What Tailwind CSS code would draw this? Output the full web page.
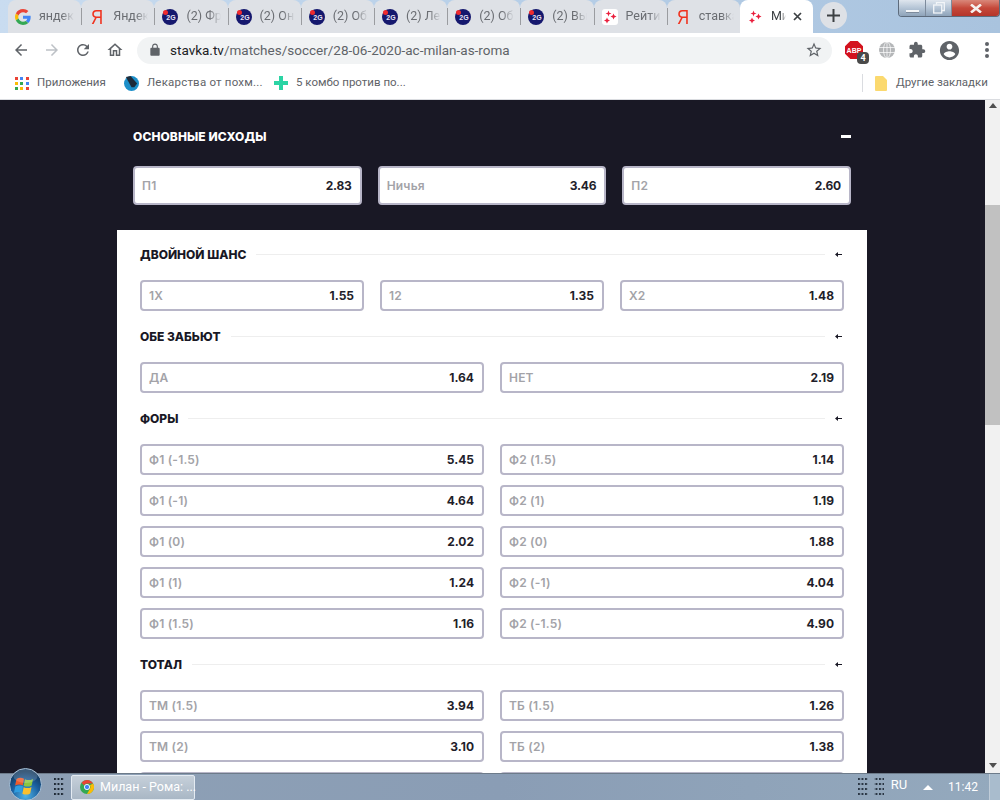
<!DOCTYPE html>
<html lang="ru">
<head>
    <meta charset="UTF-8">
    <title>Милан - Рома</title>
    <script src="https://cdn.jsdelivr.net/npm/@tailwindcss/browser@4"></script>
</head>
<body class="w-[1000px] h-[800px] overflow-hidden bg-white">
    <div class="flex flex-col h-[800px] font-['Roboto',sans-serif]">

        <!-- TABS -->
        <div class="relative flex h-[33px] shrink-0 pl-2 bg-gradient-to-r from-[#c9dcf0] via-[#b7cfe8] to-[#a9c3de]">
            <div class="flex items-center w-[73.2px] h-[33px] pl-[7px] gap-2 rounded-t-lg bg-[#dee1e6]">
                <svg class="w-4 h-4 shrink-0" viewBox="0 0 48 48"><path fill="#ea4335" d="M24 9.500c3.500 0 6.700 1.200 9.200 3.600l6.900-6.900C35.900 2.400 30.500 0 24 0 14.600 0 6.500 5.400 2.600 13.200l8 6.200C12.500 13.700 17.800 9.500 24 9.500z"/><path fill="#4285f4" d="M47 24.500c0-1.600-.1-3.100-.4-4.500H24v9h12.900c-.6 3-2.200 5.500-4.700 7.200l7.700 6c4.500-4.200 7.100-10.300 7.100-17.700z"/><path fill="#fbbc05" d="M10.600 28.600c-.5-1.400-.8-3-.8-4.600s.3-3.200.8-4.600l-8-6.200C.9 16.500 0 20.100 0 24s.9 7.500 2.600 10.800l8-6.200z"/><path fill="#34a853" d="M24 48c6.500 0 11.900-2.100 15.900-5.800l-7.700-6c-2.200 1.400-4.900 2.300-8.200 2.300-6.200 0-11.500-4.200-13.400-9.900l-8 6.200C6.500 42.600 14.600 48 24 48z"/></svg>
                <span class="w-[35px] overflow-hidden whitespace-nowrap text-[12.500px] text-[#6a6d72] [mask-image:linear-gradient(to_right,black_65%,transparent)]">яндекс</span>
            </div>
            <div class="flex items-center w-[73.2px] h-[33px] pl-[7px] gap-2 rounded-t-lg bg-[#dee1e6] border-l border-l-[#9a9ca0] [border-image:linear-gradient(transparent_25%,#9a9ca0_25%,#9a9ca0_75%,transparent_75%)_1]">
                <span class="w-4 shrink-0 text-center text-[21px] leading-4 scale-x-[.8] font-['Liberation_Sans',sans-serif] text-[#f0321e]">Я</span>
                <span class="w-[35px] overflow-hidden whitespace-nowrap text-[12.500px] text-[#6a6d72] [mask-image:linear-gradient(to_right,black_65%,transparent)]">Яндекс</span>
            </div>
            <div class="flex items-center w-[73.2px] h-[33px] pl-[7px] gap-2 rounded-t-lg bg-[#dee1e6] border-l border-l-[#9a9ca0] [border-image:linear-gradient(transparent_25%,#9a9ca0_25%,#9a9ca0_75%,transparent_75%)_1]">
                <svg class="w-4 h-4 shrink-0" viewBox="0 0 16 16"><circle cx="8" cy="8" r="8" fill="#15186e"/><circle cx="3.500" cy="3.500" r="2.500" fill="#ee2a2e"/><text x="9" y="11" text-anchor="middle" font-size="7" font-weight="700" fill="#e8e4f4" font-family="Liberation Sans">2G</text></svg>
                <span class="w-[35px] overflow-hidden whitespace-nowrap text-[12.500px] text-[#6a6d72] [mask-image:linear-gradient(to_right,black_65%,transparent)]">(2) Фрг</span>
            </div>
            <div class="flex items-center w-[73.2px] h-[33px] pl-[7px] gap-2 rounded-t-lg bg-[#dee1e6] border-l border-l-[#9a9ca0] [border-image:linear-gradient(transparent_25%,#9a9ca0_25%,#9a9ca0_75%,transparent_75%)_1]">
                <svg class="w-4 h-4 shrink-0" viewBox="0 0 16 16"><circle cx="8" cy="8" r="8" fill="#15186e"/><circle cx="3.500" cy="3.500" r="2.500" fill="#ee2a2e"/><text x="9" y="11" text-anchor="middle" font-size="7" font-weight="700" fill="#e8e4f4" font-family="Liberation Sans">2G</text></svg>
                <span class="w-[35px] overflow-hidden whitespace-nowrap text-[12.500px] text-[#6a6d72] [mask-image:linear-gradient(to_right,black_65%,transparent)]">(2) Она</span>
            </div>
            <div class="flex items-center w-[73.2px] h-[33px] pl-[7px] gap-2 rounded-t-lg bg-[#dee1e6] border-l border-l-[#9a9ca0] [border-image:linear-gradient(transparent_25%,#9a9ca0_25%,#9a9ca0_75%,transparent_75%)_1]">
                <svg class="w-4 h-4 shrink-0" viewBox="0 0 16 16"><circle cx="8" cy="8" r="8" fill="#15186e"/><circle cx="3.500" cy="3.500" r="2.500" fill="#ee2a2e"/><text x="9" y="11" text-anchor="middle" font-size="7" font-weight="700" fill="#e8e4f4" font-family="Liberation Sans">2G</text></svg>
                <span class="w-[35px] overflow-hidden whitespace-nowrap text-[12.500px] text-[#6a6d72] [mask-image:linear-gradient(to_right,black_65%,transparent)]">(2) Обз</span>
            </div>
            <div class="flex items-center w-[73.2px] h-[33px] pl-[7px] gap-2 rounded-t-lg bg-[#dee1e6] border-l border-l-[#9a9ca0] [border-image:linear-gradient(transparent_25%,#9a9ca0_25%,#9a9ca0_75%,transparent_75%)_1]">
                <svg class="w-4 h-4 shrink-0" viewBox="0 0 16 16"><circle cx="8" cy="8" r="8" fill="#15186e"/><circle cx="3.500" cy="3.500" r="2.500" fill="#ee2a2e"/><text x="9" y="11" text-anchor="middle" font-size="7" font-weight="700" fill="#e8e4f4" font-family="Liberation Sans">2G</text></svg>
                <span class="w-[35px] overflow-hidden whitespace-nowrap text-[12.500px] text-[#6a6d72] [mask-image:linear-gradient(to_right,black_65%,transparent)]">(2) Лет</span>
            </div>
            <div class="flex items-center w-[73.2px] h-[33px] pl-[7px] gap-2 rounded-t-lg bg-[#dee1e6] border-l border-l-[#9a9ca0] [border-image:linear-gradient(transparent_25%,#9a9ca0_25%,#9a9ca0_75%,transparent_75%)_1]">
                <svg class="w-4 h-4 shrink-0" viewBox="0 0 16 16"><circle cx="8" cy="8" r="8" fill="#15186e"/><circle cx="3.500" cy="3.500" r="2.500" fill="#ee2a2e"/><text x="9" y="11" text-anchor="middle" font-size="7" font-weight="700" fill="#e8e4f4" font-family="Liberation Sans">2G</text></svg>
                <span class="w-[35px] overflow-hidden whitespace-nowrap text-[12.500px] text-[#6a6d72] [mask-image:linear-gradient(to_right,black_65%,transparent)]">(2) Обз</span>
            </div>
            <div class="flex items-center w-[73.2px] h-[33px] pl-[7px] gap-2 rounded-t-lg bg-[#dee1e6] border-l border-l-[#9a9ca0] [border-image:linear-gradient(transparent_25%,#9a9ca0_25%,#9a9ca0_75%,transparent_75%)_1]">
                <svg class="w-4 h-4 shrink-0" viewBox="0 0 16 16"><circle cx="8" cy="8" r="8" fill="#15186e"/><circle cx="3.500" cy="3.500" r="2.500" fill="#ee2a2e"/><text x="9" y="11" text-anchor="middle" font-size="7" font-weight="700" fill="#e8e4f4" font-family="Liberation Sans">2G</text></svg>
                <span class="w-[35px] overflow-hidden whitespace-nowrap text-[12.500px] text-[#6a6d72] [mask-image:linear-gradient(to_right,black_65%,transparent)]">(2) Выб</span>
            </div>
            <div class="flex items-center w-[73.2px] h-[33px] pl-[7px] gap-2 rounded-t-lg bg-[#dee1e6] border-l border-l-[#9a9ca0] [border-image:linear-gradient(transparent_25%,#9a9ca0_25%,#9a9ca0_75%,transparent_75%)_1]">
                <svg class="w-4 h-4 shrink-0 rounded-[3px] bg-white" viewBox="0 0 16 16"><path fill="#ea1f3d" d="M6.500 1.500l.8 2.200 2.200.8-2.200.8-.8 2.200-.8-2.200-2.200-.8 2.200-.8zM11.500 4.500l.9 2.100 2.100.9-2.100.9-.9 2.100-.9-2.100-2.100-.9 2.100-.9zM5 8.500l.9 2.100 2.100.9-2.100.9L5 14.500l-.9-2.100-2.100-.9 2.100-.9z"/></svg>
                <span class="w-[35px] overflow-hidden whitespace-nowrap text-[12.500px] text-[#6a6d72] [mask-image:linear-gradient(to_right,black_65%,transparent)]">Рейтинг</span>
            </div>
            <div class="flex items-center w-[73.2px] h-[33px] pl-[7px] gap-2 rounded-t-lg bg-[#dee1e6] border-l border-l-[#9a9ca0] [border-image:linear-gradient(transparent_25%,#9a9ca0_25%,#9a9ca0_75%,transparent_75%)_1]">
                <span class="w-4 shrink-0 text-center text-[21px] leading-4 scale-x-[.8] font-['Liberation_Sans',sans-serif] text-[#f0321e]">Я</span>
                <span class="w-[35px] overflow-hidden whitespace-nowrap text-[12.500px] text-[#6a6d72] [mask-image:linear-gradient(to_right,black_65%,transparent)]">ставка</span>
            </div>
            <div class="flex items-center w-[73.2px] h-[33px] pl-[7px] gap-2 rounded-t-lg bg-white">
                <svg class="w-4 h-4 shrink-0" viewBox="0 0 16 16"><path fill="#ea1f3d" d="M6.500 1.500l.8 2.200 2.200.8-2.200.8-.8 2.200-.8-2.200-2.200-.8 2.200-.8zM11.500 4.500l.9 2.100 2.100.9-2.100.9-.9 2.100-.9-2.100-2.100-.9 2.100-.9zM5 8.500l.9 2.100 2.100.9-2.100.9L5 14.500l-.9-2.100-2.100-.9 2.100-.9z"/></svg>
                <span class="w-[15px] overflow-hidden whitespace-nowrap text-[12.500px] text-[#3c4043] [mask-image:linear-gradient(to_right,black_65%,transparent)]">Милан</span>
                <svg class="w-[9px] h-[9px] -ml-[1px] shrink-0" viewBox="0 0 9 9" stroke="#3c4043" stroke-width="1.700"><path d="M1 1l7 7M8 1l-7 7"/></svg>
            </div>
            <div class="flex items-center justify-center w-[27px] h-[27px] ml-[7px] mt-[2px] rounded-full bg-[#dee1e6]">
                <svg class="w-[13px] h-[13px]" viewBox="0 0 13 13" fill="#3c4043"><path d="M5.500 0h2v5.500H13v2H7.500V13h-2V7.500H0v-2h5.500z"/></svg>
            </div>
            <!-- window buttons -->
            <div class="absolute top-0 right-0 flex w-[102px] h-[17px] rounded-b-[4px] border border-t-0 border-[#5d6b7c] overflow-hidden">
                <div class="flex items-end justify-center w-[27px] pb-[3px] bg-gradient-to-b from-[#dfe6ee] via-[#b5c5d6] to-[#8ea3b9] border-r border-[#7d8b9c]"><div class="w-[13px] h-[3px] bg-[#f4f6f8] border-b border-[#7d8b9c]"></div></div>
                <div class="flex items-center justify-center w-[26px] bg-gradient-to-b from-[#dfe6ee] via-[#b5c5d6] to-[#8ea3b9] border-r border-[#7d8b9c]"><svg class="w-[12px] h-[12px]" viewBox="0 0 12 12" fill="none" stroke="#f2f5f8" stroke-width="1.300"><path d="M3.500 2.500V.7h7.800v7.800H9"/><rect x=".7" y="3" width="8" height="8"/></svg></div>
                <div class="flex items-center justify-center flex-1 bg-gradient-to-b from-[#d9877a] via-[#c5483a] to-[#b5352a]"><svg class="w-[12px] h-[9px]" viewBox="0 0 12 9" stroke="#f5f0ee" stroke-width="2.600"><path d="M1 0.500l10 8M11 0.500l-10 8"/></svg></div>
            </div>
        </div>

        <!-- TOOLBAR -->
        <div class="flex items-center h-[34px] shrink-0 bg-white">
            <div class="flex items-center w-[137px] shrink-0 pl-3 gap-[13px]">
                <svg class="w-[18px] h-[18px]" viewBox="0 0 24 24" fill="#5f6368"><path d="M20 11H7.830l5.590-5.590L12 4l-8 8 8 8 1.410-1.410L7.830 13H20v-2z"/></svg>
                <svg class="w-[18px] h-[18px]" viewBox="0 0 24 24" fill="#bdc1c6"><path d="M4 13h12.170l-5.590 5.590L12 20l8-8-8-8-1.410 1.410L16.170 11H4v2z"/></svg>
                <svg class="w-[18px] h-[18px]" viewBox="0 0 24 24" fill="#5f6368"><path d="M17.650 6.350A7.958 7.958 0 0 0 12 4c-4.420 0-7.990 3.580-7.990 8s3.570 8 7.990 8c3.730 0 6.840-2.550 7.730-6h-2.080A5.990 5.990 0 0 1 12 18c-3.310 0-6-2.690-6-6s2.690-6 6-6c1.660 0 3.140.690 4.220 1.780L13 11h7V4l-2.350 2.350z"/></svg>
                <svg class="w-[18px] h-[18px] ml-[1px]" viewBox="0 0 24 24" fill="#5f6368"><path d="M12 5.690l5 4.500V18h-2v-6H9v6H7v-7.810l5-4.500M12 3L2 12h3v8h6v-6h2v6h6v-8h3L12 3z"/></svg>
            </div>
            <div class="flex items-center w-[695px] h-[27px] shrink-0 pl-[11px] pr-[9px] rounded-full bg-[#f1f3f4]">
                <svg class="w-3.5 h-3.5 shrink-0" viewBox="0 0 24 24" fill="#5f6368"><path d="M18 8h-1V6c0-2.760-2.240-5-5-5S7 3.240 7 6v2H6c-1.100 0-2 .9-2 2v10c0 1.100.9 2 2 2h12c1.100 0 2-.9 2-2V10c0-1.100-.9-2-2-2zM9 6c0-1.660 1.340-3 3-3s3 1.340 3 3v2H9V6z"/></svg>
                <span class="ml-[8px] text-[13.500px] text-[#5f6368] flex-1 whitespace-nowrap"><span class="text-[#202124]">stavka.tv</span>/matches/soccer/28-06-2020-ac-milan-as-roma</span>
                <svg class="w-[18px] h-[18px] shrink-0" viewBox="0 0 24 24" fill="#5f6368"><path d="M22 9.240l-7.190-.62L12 2 9.190 8.630 2 9.240l5.460 4.730L5.820 21 12 17.270 18.180 21l-1.630-7.030L22 9.240zM12 15.400l-3.760 2.270 1-4.280-3.320-2.880 4.380-.38L12 6.100l1.710 4.040 4.380.38-3.320 2.880 1 4.280L12 15.400z"/></svg>
            </div>
            <div class="relative flex items-center flex-1 pl-[13px] gap-[12px]">
                <div class="relative w-[18px] h-[18px]">
                    <svg class="w-[18px] h-[18px]" viewBox="0 0 18 18"><path fill="#d3121e" d="M5.300 0h7.400L18 5.300v7.400L12.700 18H5.300L0 12.700V5.300z"/><text x="9" y="11.500" text-anchor="middle" font-size="7" font-weight="700" fill="#fff" font-family="Liberation Sans">ABP</text></svg>
                    <span class="absolute -right-[6px] -bottom-[5px] w-3 h-[12px] rounded-sm bg-[#4a4a4a] text-white text-[9px] leading-[12px] text-center font-bold">4</span>
                </div>
                <svg class="w-4 h-4 ml-[4px]" viewBox="0 0 16 16" fill="none" stroke="#fff" stroke-width=".7"><circle cx="8" cy="8" r="8" fill="#b4b6b8" stroke="none"/><ellipse cx="8" cy="8" rx="3.500" ry="8"/><path d="M0 5.500h16M0 10.500h16M8 0v16"/></svg>
                <svg class="w-[18px] h-[18px] ml-[1px]" viewBox="0 0 24 24" fill="#5f6368"><path d="M20.500 11H19V7c0-1.100-.9-2-2-2h-4V3.500C13 2.120 11.880 1 10.500 1S8 2.120 8 3.500V5H4c-1.100 0-1.990.9-1.990 2v3.800H3.500c1.490 0 2.700 1.210 2.700 2.700s-1.210 2.700-2.700 2.700H2V20c0 1.100.9 2 2 2h3.800v-1.500c0-1.490 1.210-2.700 2.700-2.700 1.490 0 2.700 1.210 2.700 2.700V22H17c1.100 0 2-.9 2-2v-4h1.500c1.380 0 2.500-1.120 2.500-2.500S21.880 11 20.500 11z"/></svg>
                <svg class="w-[23px] h-[23px]" viewBox="0 0 24 24" fill="#5f6368"><path d="M12 2C6.480 2 2 6.480 2 12s4.480 10 10 10 10-4.480 10-10S17.520 2 12 2zm0 3c1.660 0 3 1.340 3 3s-1.340 3-3 3-3-1.340-3-3 1.340-3 3-3zm0 14.200c-2.500 0-4.710-1.280-6-3.220.03-1.990 4-3.080 6-3.080 1.990 0 5.970 1.090 6 3.080-1.290 1.940-3.500 3.220-6 3.220z"/></svg>
                <div class="flex flex-col gap-[2.500px] ml-[12px]">
                    <div class="w-[3.500px] h-[3.500px] rounded-full bg-[#5f6368]"></div>
                    <div class="w-[3.500px] h-[3.500px] rounded-full bg-[#5f6368]"></div>
                    <div class="w-[3.500px] h-[3.500px] rounded-full bg-[#5f6368]"></div>
                </div>
            </div>
        </div>

        <!-- BOOKMARKS -->
        <div class="flex items-center h-[33px] shrink-0 pl-[15px] pr-[14px] bg-white border-b border-[#dadce0] text-[11.500px] text-[#5f6368]">
            <div class="grid grid-cols-3 gap-[2px] w-[14px] shrink-0">
                <div class="w-[3px] h-[3px] bg-[#ea4335]"></div><div class="w-[3px] h-[3px] bg-[#4285f4]"></div><div class="w-[3px] h-[3px] bg-[#ea4335]"></div>
                <div class="w-[3px] h-[3px] bg-[#fbbc05]"></div><div class="w-[3px] h-[3px] bg-[#34a853]"></div><div class="w-[3px] h-[3px] bg-[#4285f4]"></div>
                <div class="w-[3px] h-[3px] bg-[#34a853]"></div><div class="w-[3px] h-[3px] bg-[#fbbc05]"></div><div class="w-[3px] h-[3px] bg-[#ea4335]"></div>
            </div>
            <span class="ml-[8px] w-[69px] whitespace-nowrap">Приложения</span>
            <svg class="w-[15px] h-[15px] ml-[18px] shrink-0" viewBox="0 0 16 16"><circle cx="8" cy="8" r="8" fill="#1c8fc9"/><path fill="#1d2b3a" d="M2 1l5-1 7 8-3 4-3 0z"/></svg>
            <span class="ml-[8px] w-[121px] whitespace-nowrap tracking-[0.2px]">Лекарства от похм...</span>
            <svg class="w-[14px] h-[14px] ml-[6px] shrink-0" viewBox="0 0 14 14" fill="#2bd4a4"><path d="M5 0h4v5h5v4H9v5H5V9H0V5h5z"/></svg>
            <span class="ml-[8px] whitespace-nowrap">5 комбо против по...</span>
            <div class="ml-auto w-px h-[18px] bg-[#dadce0]"></div>
            <svg class="w-3 h-[15px] ml-[12px] shrink-0" viewBox="0 0 12 15"><path fill="#fbd96f" d="M1 0h7l4 4v10a1 1 0 0 1-1 1H1a1 1 0 0 1-1-1V1a1 1 0 0 1 1-1z"/></svg>
            <span class="ml-[9px] w-[90px] whitespace-nowrap">Другие закладки</span>
        </div>

        <!-- PAGE -->
        <div class="flex h-[673px] shrink-0 overflow-hidden">
            <main class="w-[985px] shrink-0 bg-[#191825] font-['Inter',sans-serif] [font-feature-settings:'calt'_0] overflow-hidden">
                <section class="w-[750px] ml-[117px] pt-[28px]">
                    <div class="px-4">
                        <div class="flex items-center justify-between h-4 mb-[22px]">
                            <h2 class="pt-[1px] text-[12px] font-extrabold tracking-[0.1px] text-white">ОСНОВНЫЕ ИСХОДЫ</h2>
                            <div class="w-[10px] h-[3px] bg-white"></div>
                        </div>
                        <div class="grid grid-cols-3 gap-4 mb-[25px]">
                            <div class="flex items-center justify-between h-[39px] pl-[7px] pr-2 rounded border-2 border-[#b8b6c8] bg-white"><span class="text-xs font-semibold tracking-[0.2px] text-[#a3a3a8]">П1</span><span class="text-xs font-bold tracking-[-0.2px] text-[#1f1e2b]">2.83</span></div>
                            <div class="flex items-center justify-between h-[39px] pl-[7px] pr-2 rounded border-2 border-[#b8b6c8] bg-white"><span class="text-xs font-semibold tracking-[0.2px] text-[#a3a3a8]">Ничья</span><span class="text-xs font-bold tracking-[-0.2px] text-[#1f1e2b]">3.46</span></div>
                            <div class="flex items-center justify-between h-[39px] pl-[7px] pr-2 rounded border-2 border-[#b8b6c8] bg-white"><span class="text-xs font-semibold tracking-[0.2px] text-[#a3a3a8]">П2</span><span class="text-xs font-bold tracking-[-0.2px] text-[#1f1e2b]">2.60</span></div>
                        </div>
                    </div>

                    <div class="bg-white pt-4 pl-[23px] pr-[23px] pb-8">
                        <div class="flex items-center h-4 mb-[18px]">
                            <h3 class="pt-[1px] text-[12px] font-extrabold text-[#191825]">ДВОЙНОЙ ШАНС</h3>
                            <div class="flex-1 h-px mx-[10px] bg-[#eeeeee]"></div>
                            <svg class="w-[7px] h-[5px] mr-[2px]" viewBox="0 0 7 5" fill="#191825"><path d="M0 2.500L3 0v2h4v1H3v2z"/></svg>
                        </div>
                        <div class="grid grid-cols-3 gap-4">
                            <div class="flex items-center justify-between h-[31px] pl-[7px] pr-2 rounded border-2 border-[#b8b6c8]"><span class="text-xs font-semibold tracking-[0.2px] text-[#a3a3a8]">1Х</span><span class="text-xs font-bold text-[#1f1e2b]">1.55</span></div>
                            <div class="flex items-center justify-between h-[31px] pl-[7px] pr-2 rounded border-2 border-[#b8b6c8]"><span class="text-xs font-semibold tracking-[0.2px] text-[#a3a3a8]">12</span><span class="text-xs font-bold text-[#1f1e2b]">1.35</span></div>
                            <div class="flex items-center justify-between h-[31px] pl-[7px] pr-2 rounded border-2 border-[#b8b6c8]"><span class="text-xs font-semibold tracking-[0.2px] text-[#a3a3a8]">Х2</span><span class="text-xs font-bold text-[#1f1e2b]">1.48</span></div>
                        </div>

                        <div class="flex items-center h-4 mt-[17px] mb-[18px]">
                            <h3 class="pt-[1px] text-[12px] font-extrabold text-[#191825]">ОБЕ ЗАБЬЮТ</h3>
                            <div class="flex-1 h-px mx-[10px] bg-[#eeeeee]"></div>
                            <svg class="w-[7px] h-[5px] mr-[2px]" viewBox="0 0 7 5" fill="#191825"><path d="M0 2.500L3 0v2h4v1H3v2z"/></svg>
                        </div>
                        <div class="grid grid-cols-2 gap-4">
                            <div class="flex items-center justify-between h-[31px] pl-[7px] pr-2 rounded border-2 border-[#b8b6c8]"><span class="text-xs font-semibold tracking-[0.2px] text-[#a3a3a8]">ДА</span><span class="text-xs font-bold text-[#1f1e2b]">1.64</span></div>
                            <div class="flex items-center justify-between h-[31px] pl-[7px] pr-2 rounded border-2 border-[#b8b6c8]"><span class="text-xs font-semibold tracking-[0.2px] text-[#a3a3a8]">НЕТ</span><span class="text-xs font-bold text-[#1f1e2b]">2.19</span></div>
                        </div>

                        <div class="flex items-center h-4 mt-[17px] mb-[18px]">
                            <h3 class="pt-[1px] text-[12px] font-extrabold text-[#191825]">ФОРЫ</h3>
                            <div class="flex-1 h-px mx-[10px] bg-[#eeeeee]"></div>
                            <svg class="w-[7px] h-[5px] mr-[2px]" viewBox="0 0 7 5" fill="#191825"><path d="M0 2.500L3 0v2h4v1H3v2z"/></svg>
                        </div>
                        <div class="grid grid-cols-2 gap-x-4 gap-y-[10px]">
                            <div class="flex items-center justify-between h-[31px] pl-[7px] pr-2 rounded border-2 border-[#b8b6c8]"><span class="text-xs font-semibold tracking-[0.2px] text-[#a3a3a8]">Ф1 (-1.5)</span><span class="text-xs font-bold text-[#1f1e2b]">5.45</span></div>
                            <div class="flex items-center justify-between h-[31px] pl-[7px] pr-2 rounded border-2 border-[#b8b6c8]"><span class="text-xs font-semibold tracking-[0.2px] text-[#a3a3a8]">Ф2 (1.5)</span><span class="text-xs font-bold text-[#1f1e2b]">1.14</span></div>
                            <div class="flex items-center justify-between h-[31px] pl-[7px] pr-2 rounded border-2 border-[#b8b6c8]"><span class="text-xs font-semibold tracking-[0.2px] text-[#a3a3a8]">Ф1 (-1)</span><span class="text-xs font-bold text-[#1f1e2b]">4.64</span></div>
                            <div class="flex items-center justify-between h-[31px] pl-[7px] pr-2 rounded border-2 border-[#b8b6c8]"><span class="text-xs font-semibold tracking-[0.2px] text-[#a3a3a8]">Ф2 (1)</span><span class="text-xs font-bold text-[#1f1e2b]">1.19</span></div>
                            <div class="flex items-center justify-between h-[31px] pl-[7px] pr-2 rounded border-2 border-[#b8b6c8]"><span class="text-xs font-semibold tracking-[0.2px] text-[#a3a3a8]">Ф1 (0)</span><span class="text-xs font-bold text-[#1f1e2b]">2.02</span></div>
                            <div class="flex items-center justify-between h-[31px] pl-[7px] pr-2 rounded border-2 border-[#b8b6c8]"><span class="text-xs font-semibold tracking-[0.2px] text-[#a3a3a8]">Ф2 (0)</span><span class="text-xs font-bold text-[#1f1e2b]">1.88</span></div>
                            <div class="flex items-center justify-between h-[31px] pl-[7px] pr-2 rounded border-2 border-[#b8b6c8]"><span class="text-xs font-semibold tracking-[0.2px] text-[#a3a3a8]">Ф1 (1)</span><span class="text-xs font-bold text-[#1f1e2b]">1.24</span></div>
                            <div class="flex items-center justify-between h-[31px] pl-[7px] pr-2 rounded border-2 border-[#b8b6c8]"><span class="text-xs font-semibold tracking-[0.2px] text-[#a3a3a8]">Ф2 (-1)</span><span class="text-xs font-bold text-[#1f1e2b]">4.04</span></div>
                            <div class="flex items-center justify-between h-[31px] pl-[7px] pr-2 rounded border-2 border-[#b8b6c8]"><span class="text-xs font-semibold tracking-[0.2px] text-[#a3a3a8]">Ф1 (1.5)</span><span class="text-xs font-bold text-[#1f1e2b]">1.16</span></div>
                            <div class="flex items-center justify-between h-[31px] pl-[7px] pr-2 rounded border-2 border-[#b8b6c8]"><span class="text-xs font-semibold tracking-[0.2px] text-[#a3a3a8]">Ф2 (-1.5)</span><span class="text-xs font-bold text-[#1f1e2b]">4.90</span></div>
                        </div>

                        <div class="flex items-center h-4 mt-[17px] mb-[18px]">
                            <h3 class="pt-[1px] text-[12px] font-extrabold text-[#191825]">ТОТАЛ</h3>
                            <div class="flex-1 h-px mx-[10px] bg-[#eeeeee]"></div>
                            <svg class="w-[7px] h-[5px] mr-[2px]" viewBox="0 0 7 5" fill="#191825"><path d="M0 2.500L3 0v2h4v1H3v2z"/></svg>
                        </div>
                        <div class="grid grid-cols-2 gap-x-4 gap-y-[10px]">
                            <div class="flex items-center justify-between h-[31px] pl-[7px] pr-2 rounded border-2 border-[#b8b6c8]"><span class="text-xs font-semibold tracking-[0.2px] text-[#a3a3a8]">ТМ (1.5)</span><span class="text-xs font-bold text-[#1f1e2b]">3.94</span></div>
                            <div class="flex items-center justify-between h-[31px] pl-[7px] pr-2 rounded border-2 border-[#b8b6c8]"><span class="text-xs font-semibold tracking-[0.2px] text-[#a3a3a8]">ТБ (1.5)</span><span class="text-xs font-bold text-[#1f1e2b]">1.26</span></div>
                            <div class="flex items-center justify-between h-[31px] pl-[7px] pr-2 rounded border-2 border-[#b8b6c8]"><span class="text-xs font-semibold tracking-[0.2px] text-[#a3a3a8]">ТМ (2)</span><span class="text-xs font-bold text-[#1f1e2b]">3.10</span></div>
                            <div class="flex items-center justify-between h-[31px] pl-[7px] pr-2 rounded border-2 border-[#b8b6c8]"><span class="text-xs font-semibold tracking-[0.2px] text-[#a3a3a8]">ТБ (2)</span><span class="text-xs font-bold text-[#1f1e2b]">1.38</span></div>
                            <div class="h-[31px] rounded border-2 border-[#b8b6c8]"></div>
                            <div class="h-[31px] rounded border-2 border-[#b8b6c8]"></div>
                        </div>
                    </div>
                </section>
            </main>
            <!-- scrollbar -->
            <div class="flex flex-col items-center justify-between w-[15px] shrink-0 bg-[#f1f1f1] relative">
                <div class="mt-[3px] w-0 h-0 border-x-[4px] border-x-transparent border-b-[5px] border-b-[#505050]"></div>
                <div class="absolute top-[105px] left-0 w-[15px] h-[220px] bg-[#c1c1c1]"></div>
                <div class="mb-[5px] w-0 h-0 border-x-[4px] border-x-transparent border-t-[5px] border-t-[#505050]"></div>
            </div>
        </div>

        <!-- TASKBAR -->
        <div class="relative flex items-center h-[27px] shrink-0 bg-gradient-to-r from-[#8ea0b5] via-[#8a9db5] to-[#94a9bd] border-t border-[#6d7b8a]">
            <svg class="absolute left-[9px] -top-[6px] w-[33px] h-[33px]" viewBox="0 0 33 33">
                <defs><radialGradient id="orb" cx="50%" cy="85%" r="75%"><stop offset="0" stop-color="#4fb4e8"/><stop offset=".6" stop-color="#1a5e9e"/><stop offset="1" stop-color="#12395f"/></radialGradient></defs>
                <circle cx="16.500" cy="16.500" r="16" fill="url(#orb)" stroke="#a8c0d6" stroke-width="1"/>
                <path fill="#ee5a2a" d="M7.500 11c2.500-1.500 5-1.500 7.500-.2l-1.200 6.500c-2.500-1.200-5-1.200-7.700.2z"/>
                <path fill="#8cc63f" d="M16 11.200c2.500 1.200 5.200 1.200 8-.3l-1.300 6.500c-2.800 1.500-5.400 1.500-8 .3z"/>
                <path fill="#2f9de0" d="M6.300 18.500c2.600-1.400 5.200-1.400 7.600-.2l-1.300 6.500c-2.400-1.200-5-1.200-7.600.2z"/>
                <path fill="#fbc02d" d="M14.700 19.200c2.600 1.200 5.200 1.200 7.800-.3l-1.300 6.500c-2.700 1.500-5.300 1.500-7.800.3z"/>
                <ellipse cx="16.500" cy="8" rx="12" ry="7" fill="#fff" fill-opacity=".18"/>
            </svg>
            <svg class="ml-[54px] w-[10px] h-[18px] shrink-0" viewBox="0 0 10 18"><defs><pattern id="gripa" width="3.500" height="5" patternUnits="userSpaceOnUse"><rect width="2" height="2" fill="#1f2a36"/></pattern></defs><rect width="10" height="18" fill="url(#gripa)"/></svg>
            <div class="flex items-center w-[124px] h-[25px] ml-[7px] pl-2 gap-[6px] rounded-[2px] border border-[#e4ebf2] bg-gradient-to-b from-[#c6d0da] to-[#a9b7c5]">
                <svg class="w-[14px] h-[14px] shrink-0" viewBox="0 0 16 16"><circle cx="8" cy="8" r="8" fill="#34a853"/><path fill="#ea4335" d="M8 0a8 8 0 0 1 6.930 4H8a4 4 0 0 0-3.500 2L1.800 3A8 8 0 0 1 8 0z"/><path fill="#fbbc05" d="M14.930 4A8 8 0 0 1 8 16l3.400-6A4 4 0 0 0 11.400 6z"/><circle cx="8" cy="8" r="3" fill="#4285f4" stroke="#fff"/></svg>
                <span class="text-[12.500px] text-white whitespace-nowrap">Милан - Рома: ...</span>
            </div>
            <svg class="ml-auto w-[26px] h-[18px] shrink-0" viewBox="0 0 26 18"><defs><pattern id="gripb" width="3.500" height="5" patternUnits="userSpaceOnUse"><rect width="2" height="2" fill="#2a3644"/></pattern></defs><rect width="10" height="18" fill="url(#gripb)"/><rect x="16" width="10" height="18" fill="url(#gripb)"/></svg>
            <span class="ml-[7px] mb-[4px] text-[13px] text-white">RU</span>
            <div class="ml-[16px] w-0 h-0 border-x-[5px] border-x-transparent border-b-[5px] border-b-white"></div>
            <span class="ml-[15px] text-[12px] text-white">11:42</span>
            <div class="ml-[11px] w-[11px] h-full border-l border-[#c0ccd8] bg-[#a9bccd]"></div>
        </div>
    </div>
</body>
</html>
